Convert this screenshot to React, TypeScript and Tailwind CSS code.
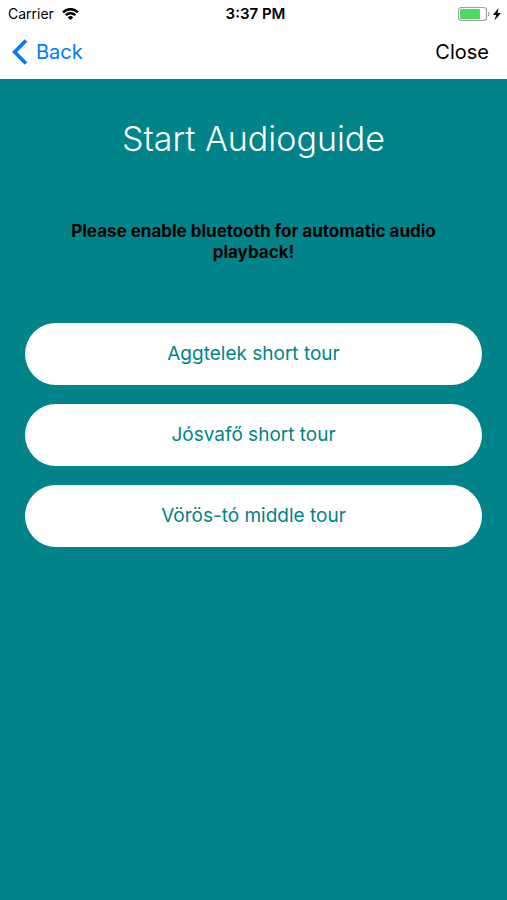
import React from 'react';

interface Tour {
  id: string;
  title: string;
}

const tours: Tour[] = [
  { id: 'aggtelek-short', title: 'Aggtelek short tour' },
  { id: 'josvafo-short', title: 'Jósvafő short tour' },
  { id: 'voros-to-middle', title: 'Vörös-tó middle tour' },
];

const WifiIcon: React.FC = () => (
  <svg className="h-3 w-[17px]" viewBox="0 0 17 12" fill="none" stroke="#000" strokeWidth="2.5" aria-hidden="true">
    <path d="M1 4.3a10.6 10.6 0 0 1 15 0" />
    <path d="M3.7 7.2a6.8 6.8 0 0 1 9.6 0" />
    <path d="M8.5 12 5.8 9.4a3.8 3.8 0 0 1 5.4 0z" fill="#000" stroke="none" />
  </svg>
);

const BatteryIcon: React.FC = () => (
  <svg className="h-[14px] w-[44px]" viewBox="0 0 44 14" aria-hidden="true">
    <rect x="0.5" y="0.5" width="28" height="13" rx="3" fill="none" stroke="#a3a3a3" strokeWidth="1.2" />
    <rect x="2" y="2" width="20" height="10" rx="1.2" fill="#4cd964" />
    <path d="M30 4.5v5c1.8-.7 1.8-4.3 0-5z" fill="#a3a3a3" />
    <path d="M40.5 1 35 8h3.2l-1.7 5.500L43 6h-3.500z" fill="#000" />
  </svg>
);

const StatusBar: React.FC = () => (
  <div className="grid h-7 grid-cols-3 items-center pr-1 pl-2 text-sm text-black">
    <div className="flex items-center gap-2">
      <span>Carrier</span>
      <WifiIcon />
    </div>
    <span className="text-center text-[15px] font-semibold">3:37 PM</span>
    <div className="flex justify-end pr-px">
      <BatteryIcon />
    </div>
  </div>
);

const NavBar: React.FC = () => (
  <nav className="flex h-[51px] items-center justify-between pr-[18px] pb-1 pl-3 text-xl">
    <button type="button" className="flex items-center gap-2 text-[#007aff]">
      <svg className="h-[26px] w-4" viewBox="0 0 16 26" fill="none" stroke="currentColor" strokeWidth="3.600" aria-hidden="true">
        <path d="M14 1.500 2.600 13 14 24.500" />
      </svg>
      Back
    </button>
    <button type="button" className="text-black">Close</button>
  </nav>
);

const App: React.FC = () => {
  return (
    <div className="flex min-h-screen flex-col bg-[#008489] font-['Inter','Liberation_Sans',sans-serif]">
      <header className="bg-white">
        <StatusBar />
        <NavBar />
      </header>
      <main className="flex flex-col px-[25px] pt-9 text-center">
        <h1 className="text-[34px] leading-[48px] font-light text-white">Start Audioguide</h1>
        <p className="mt-[58px] px-8 text-[17px] leading-[21px] font-bold text-black">
          Please enable bluetooth for automatic audio playback!
        </p>
        <div className="mt-[60px] flex flex-col gap-[19px]">
          {tours.map(tour => (
            <button key={tour.id} type="button" className="h-[62px] w-full rounded-full bg-white text-[19px] text-[#008489]">
              {tour.title}
            </button>
          ))}
        </div>
      </main>
    </div>
  );
};

export default App;
